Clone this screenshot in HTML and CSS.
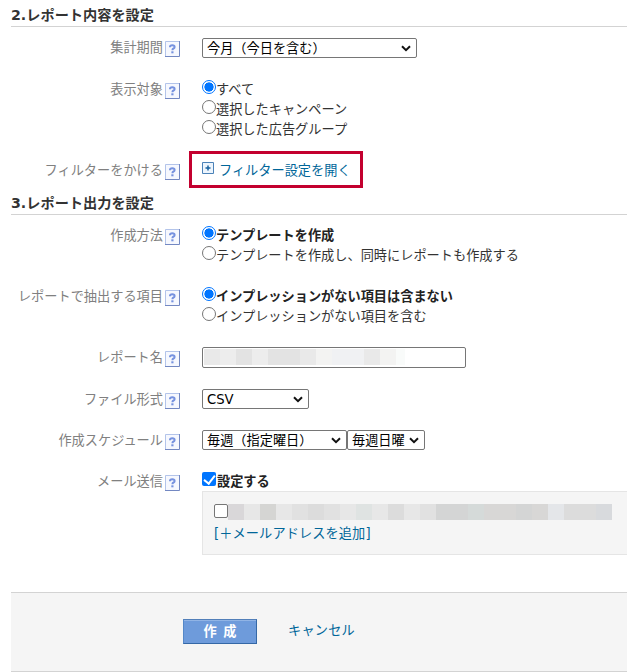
FILE: index.html
```html
<!DOCTYPE html>
<html lang="ja">
<head>
<meta charset="utf-8">
<title>レポート設定</title>
<link rel="stylesheet" href="styles.css">
</head>
<body>
<svg class="defs" width="0" height="0">
  <symbol id="help" viewBox="0 0 15 16">
    <path fill="#f6f8fe" d="M0 0h15v16H0z"/>
    <path fill="none" stroke="#b3c4ea" d="M.5 15.500V.5H14"/>
    <path fill="none" stroke="#7388c2" d="M0 15.500h14.500V0"/>
    <path fill="none" stroke="#7692df" stroke-width="2" d="M5 6.300V5.800Q5 4.200 7.300 4.200T9.600 5.900Q9.600 7 8.500 7.500T7.400 9.300"/>
    <path fill="#7692df" d="M6.300 10.300h2.200v2H6.300z"/>
  </symbol>
  <symbol id="arrow" viewBox="0 0 10 7"><path fill="none" stroke="#111" stroke-width="2" d="M1 1.300L5 5.200L9 1.300"/></symbol>
</svg>
<form>
  <section>
    <h2>2.レポート内容を設定</h2>
    <div class="row r42">
      <div class="label">集計期間<svg><use href="#help"/></svg></div>
      <div class="select period"><select><option>今月（今日を含む）</option></select><svg><use href="#arrow"/></svg></div>
    </div>
    <div class="row r81">
      <div class="label">表示対象<svg><use href="#help"/></svg></div>
      <div class="choices">
        <label><input type="radio" name="target" checked>すべて</label>
        <label><input type="radio" name="target">選択したキャンペーン</label>
        <label><input type="radio" name="target">選択した広告グループ</label>
      </div>
    </div>
    <div class="row r27">
      <div class="label">フィルターをかける<svg><use href="#help"/></svg></div>
      <a class="filter"><svg viewBox="0 0 12 12"><path fill="#edf5fd" stroke="#4b82b8" d="M.5.5h11v11H.5z"/><path stroke="#17619f" stroke-width="1.500" d="M3.500 6h5M6 3.500v5"/></svg>フィルター設定を開く</a>
    </div>
  </section>
  <section>
    <h2>3.レポート出力を設定</h2>
    <div class="row r61">
      <div class="label">作成方法<svg><use href="#help"/></svg></div>
      <div class="choices">
        <label class="strong"><input type="radio" name="method" checked>テンプレートを作成</label>
        <label><input type="radio" name="method">テンプレートを作成し、同時にレポートも作成する</label>
      </div>
    </div>
    <div class="row r61">
      <div class="label">レポートで抽出する項目<svg><use href="#help"/></svg></div>
      <div class="choices">
        <label class="strong"><input type="radio" name="items" checked>インプレッションがない項目は含まない</label>
        <label><input type="radio" name="items">インプレッションがない項目を含む</label>
      </div>
    </div>
    <div class="row r42">
      <div class="label">レポート名<svg><use href="#help"/></svg></div>
      <div class="name"><i class="g1"></i><i class="g2"></i><i class="g3"></i><i class="g2"></i><i class="g3"></i><i class="g3"></i><i class="g1"></i><i class="g4"></i><i class="g5"></i><i class="g5"></i><i class="g1"></i><i class="g4"></i><i class="g6"></i></div>
    </div>
    <div class="row r41">
      <div class="label">ファイル形式<svg><use href="#help"/></svg></div>
      <div class="select format up"><select><option>CSV</option></select><svg><use href="#arrow"/></svg></div>
    </div>
    <div class="row r41">
      <div class="label">作成スケジュール<svg><use href="#help"/></svg></div>
      <div class="select cycle up"><select><option>毎週（指定曜日）</option></select><svg><use href="#arrow"/></svg></div>
      <div class="select day up"><select><option>毎週日曜</option></select><svg><use href="#arrow"/></svg></div>
    </div>
    <div class="row r120">
      <div class="label">メール送信<svg><use href="#help"/></svg></div>
      <div class="mail">
        <label class="strong"><input type="checkbox" checked>設定する</label>
        <div class="panel">
          <div class="address"><input type="checkbox"><div class="mask"><i class="m1"></i><i class="m2"></i><i class="m3"></i><i class="m2"></i><i class="m4"></i><i class="m5"></i><i class="m4"></i><i class="m2"></i><i class="m6"></i><i class="m2"></i><i class="m5"></i><i class="m2"></i><i class="m4"></i><i class="m7"></i><i class="m7"></i><i class="m8"></i><i class="m9"></i><i class="m9"></i><i class="m7"></i><i class="m9"></i><i class="m10"></i><i class="m5"></i><i class="m5"></i><i class="m11"></i></div></div>
          <a>[＋メールアドレスを追加]</a>
        </div>
      </div>
    </div>
  </section>
  <footer><button type="button">作 成</button><a>キャンセル</a></footer>
</form>
</body>
</html>
```
FILE: styles.css
```css
* { box-sizing: border-box; }
body {
  margin: 0;
  overflow: hidden;
  background: #fff;
  color: #333;
  font: 13.2px/20px "DejaVu Sans", "Noto Sans CJK JP", sans-serif;
  white-space: nowrap;
}
.defs { position: absolute; }
form { margin-left: 11px; }
h2 {
  height: 27px;
  margin: 0 0 11px;
  padding-top: 5px;
  border-bottom: 1px solid #d3d3d3;
  font-size: 14.2px;
  line-height: 20px;
}
.row { display: flex; align-items: flex-start; }
.r27 { height: 27px; }
.r41 { height: 41px; }
.r42 { height: 42px; }
.r61 { height: 61px; }
.r81 { height: 81px; }
.r120 { height: 120px; }
.label {
  display: flex;
  flex: none;
  justify-content: flex-end;
  gap: 2px;
  width: 169px;
  margin-right: 22px;
  color: #808080;
}
.label svg { width: 15px; height: 16px; margin-top: 3px; }
label { display: flex; align-items: flex-start; height: 20px; }
input {
  appearance: none;
  flex: none;
  width: 14px;
  height: 14px;
  margin: 0 1px 0 0;
  border: 1px solid #767676;
  background: #fff;
}
.choices label { line-height: 19px; }
.choices input { margin-right: 0; }
.mail > label { height: 19px; }
.strong { font-weight: 700; color: #222; }
input[type=radio] { border-radius: 50%; }
input[type=radio]:checked {
  border: 1.5px solid #0075ff;
  background: radial-gradient(circle, #0075ff 4.3px, #fff 4.9px);
}
input[type=checkbox] { border-radius: 2px; }
input[type=checkbox]:checked { display: grid; place-items: center; border: 0; background: #0075ff; }
input[type=checkbox]:checked::before {
  content: "";
  width: 5px;
  height: 9px;
  margin-top: -2px;
  border: solid #fff;
  border-width: 0 2px 2px 0;
  transform: rotate(38deg);
}
.select { position: relative; flex: none; height: 20px; }
.up { margin-top: -1px; }
.select select {
  appearance: none;
  display: block;
  width: 100%;
  height: 20px;
  padding: 1px 0 0 4px;
  border: 1px solid #767676;
  border-radius: 2px;
  background: #fff;
  color: #000;
  font: inherit;
  line-height: 18px;
}
.select svg { position: absolute; top: 7px; right: 6px; width: 10px; height: 7px; }
.period { width: 215px; }
.format { width: 107px; }
.cycle { width: 145px; }
.day { width: 78px; }
a { color: #006699; }
.filter {
  display: flex;
  gap: 5px;
  width: 174px;
  height: 37px;
  margin: -10px 0 0 -13px;
  padding: 7px 0 0 10px;
  border: 3px solid #c3002f;
}
.filter svg { width: 12px; height: 12px; margin-top: 1px; }
.name {
  display: flex;
  width: 264px;
  height: 21px;
  margin-top: -1px;
  padding: 1px;
  border: 1px solid #767676;
  border-radius: 2px;
}
.name i { width: 16px; height: 16px; }
.name .g6 { width: 9px; }
.g1 { background: #e9e9e9; }
.g2 { background: #ededed; }
.g3 { background: #e3e3e3; }
.g4 { background: #f3f3f2; }
.g5 { background: #f0f1f3; }
.g6 { background: #f9fbfa; }
.panel {
  width: 440px;
  height: 64px;
  padding: 12px 0 0 11px;
  border: 1px solid #e5e5e5;
  background: #f5f5f5;
}
.panel a { display: block; padding-top: 1px; letter-spacing: .1px; }
.address { display: flex; height: 19px; }
.address input { margin: 0; }
.mask { display: flex; height: 16px; }
.mask i { width: 16px; height: 16px; }
.m1 { background: #d9d7d9; }
.m2 { background: #e7e7e7; }
.m3 { background: #d5d5d3; }
.m4 { background: #e1e1e1; }
.m5 { background: #dcdcdc; }
.m6 { background: #dfe3e2; }
.m7 { background: #d4d5d5; }
.m8 { background: #d5dad9; }
.m9 { background: #d8d7d6; }
.m10 { background: #e4e6e9; }
.m11 { background: #d8dadd; }
footer {
  display: flex;
  align-items: flex-start;
  gap: 31px;
  height: 80px;
  padding: 26px 0 0 172px;
  border: solid #d3d3d3;
  border-width: 1px 0;
  background: #f5f5f5;
}
button {
  width: 74px;
  height: 25px;
  padding: 0;
  border: 1px solid #3568a6;
  border-top-color: #527fb9;
  border-left-color: #5588c8;
  background: #6e9bdb;
  box-shadow: inset 0 1px #91b4e5;
  color: #fff;
  font: inherit;
  font-weight: 700;
  word-spacing: 2px;
}
footer a { padding-top: 2px; letter-spacing: .2px; }
```
